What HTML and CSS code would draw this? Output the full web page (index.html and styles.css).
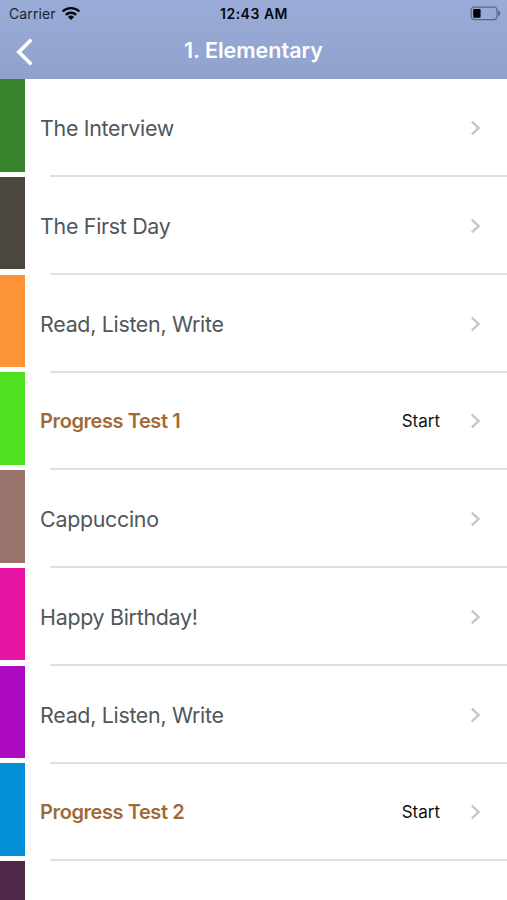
FILE: index.html
```html
<!DOCTYPE html>
<html lang="en">
<head>
<meta charset="utf-8">
<title>1. Elementary</title>
<link rel="stylesheet" href="styles.css">
</head>
<body>
<svg width="0" height="0" class="defs" aria-hidden="true">
  <symbol id="chevron" viewBox="0 0 12 18"><path d="M1.8 2.6 8.6 9l-6.8 6.4" fill="none" stroke="currentColor" stroke-width="2.4"/></symbol>
</svg>
<header class="header">
  <div class="status">
    <div class="carrier"><span>Carrier</span>
      <svg class="wifi" width="20" height="15" viewBox="0 0 20 15"><g fill="none" stroke="#05070c" stroke-width="2.4"><path d="M1.7 5.5a11.8 11.8 0 0 1 16.6 0"/><path d="M4.8 8.9a7.4 7.4 0 0 1 10.4 0"/></g><path d="M10 14 6.9 11a4.5 4.5 0 0 1 6.2 0z" fill="#05070c"/></svg>
    </div>
    <div class="time">12:43 AM</div>
    <svg class="battery" width="32" height="16" viewBox="0 0 32 16"><rect x="1.2" y="1.2" width="25.8" height="12.4" rx="3" fill="none" stroke="#59678c" stroke-width="1.2"/><rect x="3.2" y="3" width="7.4" height="8.8" rx="1" fill="#000"/><path d="M28 4.6c3.2 1 3.2 4.6 0 5.6z" fill="#59678c"/></svg>
  </div>
  <div class="nav">
    <svg class="back" width="20" height="28" viewBox="0 0 20 28"><path d="M15.2 2.7 3.9 14l11.3 11.3" fill="none" stroke="#fff" stroke-width="3.7" stroke-linecap="round"/></svg>
    <h1 class="title">1. Elementary</h1>
  </div>
</header>
<main class="list">
  <div class="row"><i class="bar green"></i><div class="cell"><span class="name">The Interview</span><svg class="chev"><use href="#chevron"/></svg></div></div>
  <div class="row"><i class="bar olive"></i><div class="cell"><span class="name">The First Day</span><svg class="chev"><use href="#chevron"/></svg></div></div>
  <div class="row"><i class="bar orange"></i><div class="cell"><span class="name">Read, Listen, Write</span><svg class="chev"><use href="#chevron"/></svg></div></div>
  <div class="row"><i class="bar lime"></i><div class="cell"><span class="name test">Progress Test 1</span><span class="start">Start</span><svg class="chev"><use href="#chevron"/></svg></div></div>
  <div class="row"><i class="bar mocha"></i><div class="cell"><span class="name">Cappuccino</span><svg class="chev"><use href="#chevron"/></svg></div></div>
  <div class="row"><i class="bar pink"></i><div class="cell"><span class="name">Happy Birthday!</span><svg class="chev"><use href="#chevron"/></svg></div></div>
  <div class="row"><i class="bar purple"></i><div class="cell"><span class="name">Read, Listen, Write</span><svg class="chev"><use href="#chevron"/></svg></div></div>
  <div class="row"><i class="bar blue"></i><div class="cell"><span class="name test">Progress Test 2</span><span class="start">Start</span><svg class="chev"><use href="#chevron"/></svg></div></div>
  <div class="row last"><i class="bar plum"></i></div>
</main>
</body>
</html>
```
FILE: styles.css
```css
* { box-sizing: border-box; }
body {
  margin: 0;
  height: 900px;
  overflow: hidden;
  background: #fff;
  font-family: Inter, "Liberation Sans", sans-serif;
}
.defs { display: block; height: 0; }
.header {
  height: 79px;
  background: linear-gradient(#9babd7, #8fa2cc);
}
.status {
  display: grid;
  grid-template-columns: 1fr auto 1fr;
  align-items: center;
  height: 27px;
  padding: 0 5px 0 9px;
  font-size: 14px;
  line-height: 20px;
  color: #05070c;
}
.carrier { display: flex; align-items: center; gap: 5px; letter-spacing: 0.1px; color: #1b2333; }
.time { margin-left: -3px; font-weight: 600; letter-spacing: 0.5px; color: #05070c; }
.battery { justify-self: end; }
.nav {
  display: grid;
  grid-template-columns: 60px 1fr 60px;
  align-items: center;
  height: 47px;
}
.back { margin: 3px 0 0 15px; }
.title {
  margin: -1px 0 0;
  font-size: 21.5px;
  font-weight: 600;
  text-align: center;
  color: #fff;
}
.row { display: flex; height: 97.75px; }
.bar { flex: none; width: 25px; height: 92.7px; margin-right: 0.5px; }
.last, .last .bar { height: 39px; }
.cell {
  flex: 1;
  display: flex;
  align-items: center;
  height: 98px;
  padding: 0 25px 0 14.6px;
  background: linear-gradient(#dedfe0, #dedfe0) 24.5px 96px / 100% 2px no-repeat;
}
.name { flex: 1; font-size: 21.4px; letter-spacing: -0.3px; color: #50575b; }
.test { font-size: 20px; font-weight: 600; letter-spacing: -0.42px; color: #a06a38; }
.start { margin-right: 30px; font-size: 17px; color: #111; }
.chev { width: 12px; height: 18px; color: #c5c6c9; }
.green { background: #37832b; }
.olive { background: #4c473e; }
.orange { background: #fc9336; }
.lime { background: #50e221; }
.mocha { background: #9b736d; }
.pink { background: #e514a3; }
.purple { background: #ac0abf; }
.blue { background: #028fd8; }
.plum { background: #502948; }
```
